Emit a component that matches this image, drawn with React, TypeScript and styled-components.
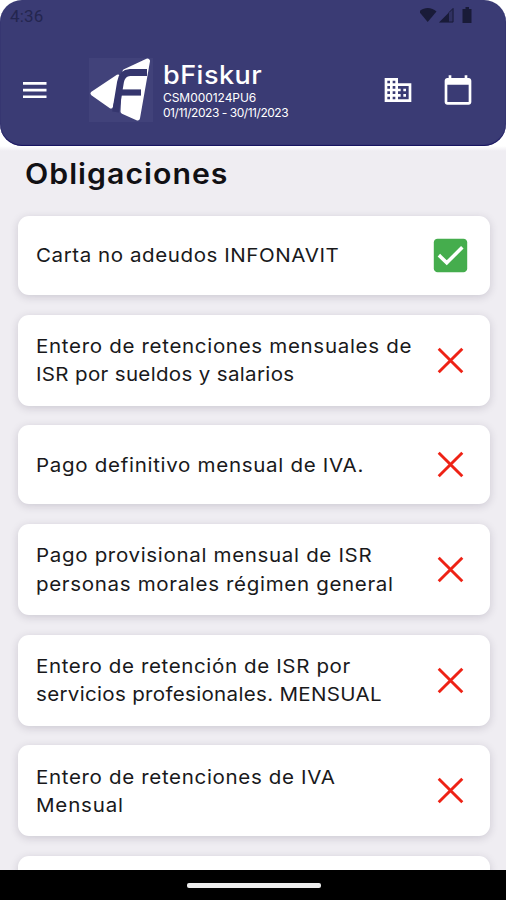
import React from "react";
import styled, { createGlobalStyle } from "styled-components";

const GlobalStyle = createGlobalStyle`
  * { box-sizing: border-box; }
  body {
    margin: 0;
    background: #fff;
    font-family: Inter, "Liberation Sans", sans-serif;
    overflow: hidden;
  }
`;

const Screen = styled.div`
  width: 506px;
  height: 900px;
  display: flex;
  flex-direction: column;
  background: linear-gradient(#fff 0 146px, #efedf2 151px);
  overflow: hidden;
`;

const Header = styled.header`
  flex: none;
  height: 146px;
  border-radius: 22px;
  background: #3a3b74;
  box-shadow: inset 0 -1px 1px #161260;
  color: #fff;
`;

const StatusBar = styled.div`
  height: 28px;
  display: flex;
  justify-content: space-between;
  padding: 7px 32px 0 10px;
  color: #191b38;
`;

const Clock = styled.span`
  font: 17px/18px Roboto, sans-serif;
  letter-spacing: 0.2px;
  color: #24264f;
`;

const Toolbar = styled.div`
  height: 123px;
  display: flex;
  align-items: center;
  padding: 0 32px 0 23px;

  > svg { flex: none; }
`;

const Brand = styled.div`
  flex: 1;
  display: flex;
  margin-left: 42px;
`;

const Logo = styled.svg`
  width: 64px;
  height: 64px;
  background: #41427a;
`;

const Company = styled.div`
  display: flex;
  flex-direction: column;
  padding: 2px 0 0 10px;
  white-space: nowrap;
`;

const AppName = styled.div`
  font-size: 25.5px;
  line-height: 30px;
  font-weight: 500;
  letter-spacing: 0.45px;
  transform: scaleX(1.06);
  transform-origin: left;
`;

const Detail = styled.div<{ $track: number }>`
  font-size: 12px;
  line-height: 15.5px;
  letter-spacing: ${(p) => p.$track}px;
`;

const Actions = styled.div`
  display: flex;
  align-items: center;
  gap: 28px;
`;

const Content = styled.main`
  height: 724px;
  overflow: hidden;
`;

const Title = styled.h1`
  margin: 0;
  height: 70px;
  padding: 10px 0 0;
  margin-left: 25px;
  font-size: 28px;
  line-height: 36px;
  font-weight: 600;
  letter-spacing: 0.95px;
  color: #111014;
  transform: scaleX(1.08);
  transform-origin: left;
`;

const List = styled.div`
  display: flex;
  flex-direction: column;
  gap: 19.7px;
  padding: 0 16px 0 18px;
`;

const Card = styled.article<{ $tall: boolean }>`
  flex: none;
  height: ${(p) => (p.$tall ? 91 : 79)}px;
  display: flex;
  align-items: center;
  justify-content: space-between;
  padding: 0 17.5px 0 17.5px;
  border-radius: 11px;
  background: #fff;
  box-shadow: 0 2px 9px rgba(50, 40, 65, 0.18);
`;

const Label = styled.div`
  font-size: 19.2px;
  line-height: 28.4px;
  color: #19191b;
  white-space: nowrap;
  transform: scaleX(1.07);
  transform-origin: left;
`;

const Line = styled.div<{ $track: number }>`
  letter-spacing: ${(p) => p.$track}px;
`;

const StateIcon = styled.svg`
  width: 45px;
  height: 45px;
`;

const NavBar = styled.footer`
  height: 30px;
  flex: none;
  display: flex;
  justify-content: center;
  padding-top: 12.5px;
  background: #000;
`;

const Handle = styled.div`
  width: 134px;
  height: 5px;
  margin-left: 1px;
  border-radius: 2px;
  background: #ececec;
`;

type Obligation = { done?: boolean; lines: [string, number][] };

const obligations: Obligation[] = [
  { done: true, lines: [["Carta no adeudos INFONAVIT", 0.53]] },
  { lines: [["Entero de retenciones mensuales de", 0.63], ["ISR por sueldos y salarios", 0.31]] },
  { lines: [["Pago definitivo mensual de IVA.", 0.65]] },
  { lines: [["Pago provisional mensual de ISR", 0.62], ["personas morales régimen general", 0.62]] },
  { lines: [["Entero de retención de ISR por", 0.58], ["servicios profesionales. MENSUAL", 0.3]] },
  { lines: [["Entero de retenciones de IVA", 0.61], ["Mensual", 0.76]] },
  { lines: [] },
];

const Check = () => (
  <StateIcon viewBox="0 0 24 24">
    <path fill="#45ad4d" d="M19 3H5c-1.11 0-2 .9-2 2v14c0 1.1.89 2 2 2h14c1.11 0 2-.9 2-2V5c0-1.1-.89-2-2-2z" transform="matrix(.99 0 0 .99 .12 .12)" />
    <path fill="none" stroke="#fff" strokeWidth="1.9" d="M5.8 11.8l4.2 4.1 8.3-8.3" />
  </StateIcon>
);

const Cross = () => (
  <StateIcon viewBox="0 0 45 45">
    <path fill="none" stroke="#ee2215" strokeWidth="2.9" d="M10.7 10.7l23.6 23.6M34.3 10.7L10.7 34.3" />
  </StateIcon>
);

const StatusIcons = () => (
  <svg width="54" height="17" viewBox="0 0 54 17" fill="currentColor">
    <path d="M-1 4.5C4-.2 11.500-.2 16.500 4.500L7.700 15z" />
    <path d="M19 15.500L33.500 1v14.500z" fillOpacity=".3" />
    <path d="M19 15.500L29 5.500v10z" />
    <path d="M29 5.500L33 1.500V15H29" fill="none" stroke="currentColor" strokeWidth="1" />
    <path d="M43 2h2.500V0h3.500v2h2.500v14H42.500V2z" />
  </svg>
);

const BrandLogo = () => (
  <Logo viewBox="0 0 64 64">
    <path fill="#fff" stroke="#fff" strokeWidth="4" strokeLinejoin="round" d="M3.500 35.500L29 18.500 22 48.500z" />
    <path fill="#fff" stroke="#fff" strokeWidth="5" strokeLinejoin="round" d="M36 13.500L58.500 3 48.500 60 34 53.500z" />
    <path fill="none" stroke="#35366e" strokeWidth="6.800" d="M26.500 54L31.500 24Q33 15 41 14.500H58" />
    <path fill="none" stroke="#35366e" strokeWidth="6.200" d="M31 34.500H52" />
  </Logo>
);

export default function App() {
  return (
    <Screen>
      <GlobalStyle />
      <Header>
        <StatusBar>
          <Clock>4:36</Clock>
          <StatusIcons />
        </StatusBar>
        <Toolbar>
          <svg width="24" height="18" viewBox="0 0 24 18" fill="#fff">
            <path d="M0 1h23.500v2.700H0zM0 7.700h23.500v2.700H0zM0 14.400h23.500v2.700H0z" />
          </svg>
          <Brand>
            <BrandLogo />
            <Company>
              <AppName>bFiskur</AppName>
              <Detail $track={-0.05}>CSM000124PU6</Detail>
              <Detail $track={-0.46}>01/11/2023 - 30/11/2023</Detail>
            </Company>
          </Brand>
          <Actions>
            <svg width="32" height="32" viewBox="0 0 24 24" fill="#fff">
              <path d="M12 7V3H2v18h20V7H12zM6 19H4v-2h2v2zm0-4H4v-2h2v2zm0-4H4V9h2v2zm0-4H4V5h2v2zm4 12H8v-2h2v2zm0-4H8v-2h2v2zm0-4H8V9h2v2zm0-4H8V5h2v2zm10 12h-8v-2h2v-2h-2v-2h2v-2h-2V9h8v10zm-2-8h-2v2h2v-2zm0 4h-2v2h2v-2z" />
            </svg>
            <svg width="32" height="32" viewBox="0 0 24 24" fill="#fff">
              <path d="M20 3h-1V1h-2v2H7V1H5v2H4c-1.100 0-2 .9-2 2v16c0 1.100.9 2 2 2h16c1.100 0 2-.9 2-2V5c0-1.100-.9-2-2-2zm0 18H4V8h16v13z" />
            </svg>
          </Actions>
        </Toolbar>
      </Header>
      <Content>
        <Title>Obligaciones</Title>
        <List>
          {obligations.map((item, i) => (
            <Card key={i} $tall={item.lines.length !== 1}>
              <Label>
                {item.lines.map(([text, track]) => (
                  <Line key={text} $track={track}>{text}</Line>
                ))}
              </Label>
              {item.done ? <Check /> : <Cross />}
            </Card>
          ))}
        </List>
      </Content>
      <NavBar>
        <Handle />
      </NavBar>
    </Screen>
  );
}
